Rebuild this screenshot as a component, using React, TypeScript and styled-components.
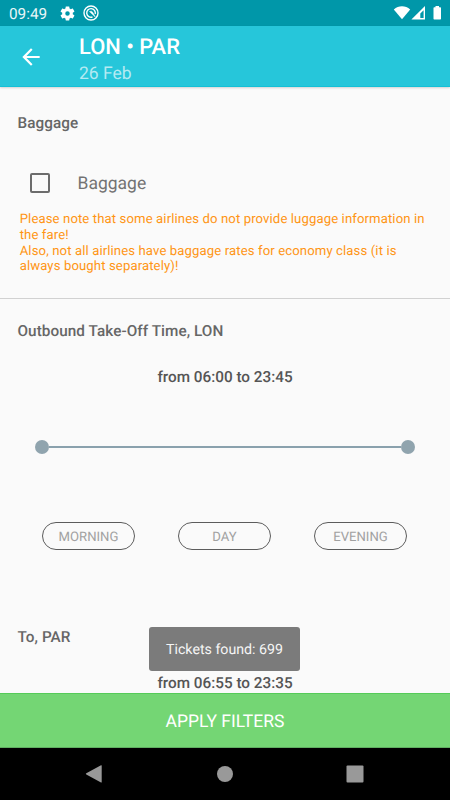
import React from "react";
import styled, { createGlobalStyle } from "styled-components";

const GlobalStyle = createGlobalStyle`
  *, *::before, *::after { box-sizing: border-box; }
  body {
    margin: 0;
    background: #fafafa;
    font-family: Roboto, "Liberation Sans", sans-serif;
    text-rendering: geometricPrecision;
  }
  button { font-family: inherit; cursor: pointer; text-rendering: inherit; }
  h1, h2, p { margin: 0; font-weight: 500; }
`;

const Screen = styled.div`
  width: 450px;
  height: 800px;
  display: flex;
  flex-direction: column;
  overflow: hidden;
  background: #fafafa;
`;

const StatusBar = styled.header`
  flex: none;
  height: 26px;
  padding: 0 7px 0 9px;
  display: flex;
  align-items: center;
  justify-content: space-between;
  background: #0097a9;
  color: #fff;
`;

const StatusGroup = styled.div`
  display: flex;
  align-items: center;
`;

const Clock = styled.span`
  width: 50px;
  font-size: 15.3px;
  line-height: 18px;
  padding-top: 1px;
  color: #e9f6f8;
`;

const RadarSlot = styled.span`
  display: flex;
  margin-left: 7px;
`;

const AppBar = styled.div`
  flex: none;
  height: 61px;
  display: flex;
  background: #26c6da;
  color: #fff;
  box-shadow: 0 1px 2px rgba(0, 0, 0, 0.16);
  border-bottom: 1px solid #14c0d6;
  z-index: 1;
`;

const BackButton = styled.button`
  width: 79px;
  padding: 1px 0 0 18px;
  border: 0;
  display: flex;
  align-items: center;
  background: none;
  color: inherit;
`;

const Titles = styled.div`
  padding-top: 9px;
`;

const Title = styled.h1`
  font-size: 21.9px;
  line-height: 26px;
`;

const Subtitle = styled.p`
  font-size: 17.5px;
  line-height: 20px;
  padding-top: 3px;
  font-weight: 400;
  color: #b5eaf2;
`;

const Content = styled.main`
  flex: 1;
  min-height: 0;
  overflow: hidden;
`;

const Section = styled.section<{ $height?: number; $divided?: boolean }>`
  height: ${(p) => (p.$height ? `${p.$height}px` : "auto")};
  border-bottom: ${(p) => (p.$divided ? "1px solid #d1d1d1" : "0")};
`;

const SectionTitle = styled.h2<{ $top: number }>`
  padding: ${(p) => p.$top}px 17.5px 0;
  font-size: 15.3px;
  line-height: 18px;
  letter-spacing: 0.06px;
  color: #666;
`;

const CheckRow = styled.label`
  height: 44px;
  margin-top: 29px;
  padding-left: 30px;
  display: flex;
  align-items: center;
`;

const CheckBox = styled.span`
  width: 20px;
  height: 20px;
  margin-right: 27.5px;
  border: 2px solid #6c6c6c;
  border-radius: 2px;
`;

const CheckLabel = styled.span`
  padding-top: 2px;
  font-size: 17.5px;
  line-height: 22px;
  color: #737373;
`;

const Notice = styled.p`
  padding: 7px 18px 0 19.7px;
  font-size: 13.13px;
  line-height: 15.75px;
  font-weight: 400;
  letter-spacing: 0.11px;
  color: #ff9514;
`;

const Range = styled.p<{ $top: number }>`
  padding-top: ${(p) => p.$top}px;
  font-size: 15.3px;
  line-height: 18px;
  text-align: center;
  color: #555;
`;

const Slider = styled.div`
  height: 14px;
  margin: 54px 35px 0;
  display: flex;
  align-items: center;
`;

const Thumb = styled.span`
  width: 14px;
  height: 14px;
  border-radius: 50%;
  background: #90a4ae;
`;

const Track = styled.span`
  flex: 1;
  height: 2px;
  background: #8aa1ad;
`;

const Chips = styled.div`
  margin: 68px 43px 0 42px;
  display: flex;
  justify-content: space-between;
`;

const Chip = styled.button`
  width: 93px;
  height: 28px;
  padding: 3px 0 0;
  border: 1px solid #5c5c5c;
  border-radius: 14px;
  background: none;
  font-size: 13.13px;
  line-height: 16px;
  color: #a1a1a1;
`;

const ApplyButton = styled.button`
  flex: none;
  height: 55px;
  padding: 3px 0 0;
  border: 0;
  border-top: 1px solid #55cb58;
  border-bottom: 1px solid #5fae61;
  background: #74d674;
  color: #fff;
  font-size: 17.5px;
  line-height: 22px;
`;

const NavBar = styled.nav`
  flex: none;
  height: 52px;
  padding: 0 86px 0 85px;
  display: flex;
  align-items: center;
  justify-content: space-between;
  background: #000;
`;

const Toast = styled.div`
  position: absolute;
  left: 149px;
  top: 627px;
  width: 151px;
  height: 44px;
  padding-top: 2px;
  display: flex;
  align-items: center;
  justify-content: center;
  border-radius: 3px;
  background: #7b7b7b;
  color: #f5f5f5;
  font-size: 14.2px;
  z-index: 2;
`;

const GearIcon = () => (
  <svg width="17" height="17" viewBox="0 0 24 24" fill="#fff">
    <path d="M19.43 12.98c.04-.32.07-.64.07-.98s-.03-.66-.07-.98l2.11-1.65c.19-.15.24-.42.12-.64l-2-3.46c-.12-.22-.39-.3-.61-.22l-2.49 1c-.52-.4-1.08-.73-1.69-.98l-.38-2.65C14.46 2.18 14.25 2 14 2h-4c-.25 0-.46.18-.49.42l-.38 2.65c-.61.25-1.17.59-1.69.98l-2.49-1c-.23-.09-.49 0-.61.22l-2 3.46c-.13.22-.07.49.12.64l2.11 1.65c-.04.32-.07.65-.07.98s.03.66.07.98l-2.11 1.65c-.19.15-.24.42-.12.64l2 3.46c.12.22.39.3.61.22l2.49-1c.52.4 1.08.73 1.69.98l.38 2.65c.03.24.24.42.49.42h4c.25 0 .46-.18.49-.42l.38-2.65c.61-.25 1.17-.59 1.69-.98l2.49 1c.23.09.49 0 .61-.22l2-3.46c.12-.22.07-.49-.12-.64l-2.11-1.65zM12 15.2a3.2 3.2 0 1 1 0-6.400 3.200 3.200 0 0 1 0 6.400z" />
  </svg>
);

const RadarIcon = () => (
  <svg width="16" height="16" viewBox="0 0 16 16" fill="none" stroke="#fff">
    <circle cx="8" cy="8" r="7" strokeWidth="1.4" />
    <path d="M9.500 12A4.300 4.300 0 1 1 12.200 9" strokeWidth="1.4" />
    <path d="M6.500 6.600Q8.600 5.400 9.800 7.500L12.300 12z" fill="#fff" strokeWidth=".5" />
  </svg>
);

const SignalIcons = () => (
  <svg width="50" height="16" viewBox="0 0 50 16" fill="#fff">
    <path d="M.8 4.4C5.5.1 12.500.1 17.200 4.400L9 14.200z" />
    <path fillRule="evenodd" d="M32 1V14.500H18.400zM30.600 5.200L27.300 8.500V13H30.600z" />
    <path d="M42.500 1H46v1.200h1.300q.7 0 .7.700V13.700q0 .7-.7.700H41.200q-.7 0-.7-.7V2.900q0-.7.700-.7H42.500z" />
  </svg>
);

const BackArrow = () => (
  <svg width="26" height="26" viewBox="0 0 24 24" fill="#fff">
    <path d="M20 11H7.830l5.590-5.590L12 4l-8 8 8 8 1.410-1.410L7.830 13H20v-2z" />
  </svg>
);

const NavIcon = ({ shape }: { shape: "back" | "home" | "recent" }) => (
  <svg width="18" height="20" viewBox="0 0 18 20" fill="#999">
    {shape === "back" && <path d="M1.300 9.300 16 1.300q.7-.4.700.4V18q0 .8-.7.400L1.300 10.500q-1-.6 0-1.200z" />}
    {shape === "home" && <circle cx="9" cy="10" r="8" />}
    {shape === "recent" && <rect x=".5" y="1.500" width="17" height="17" rx="1" />}
  </svg>
);

const PERIODS = ["MORNING", "DAY", "EVENING"];

export default function App() {
  return (
    <>
      <GlobalStyle />
      <Screen>
        <StatusBar>
          <StatusGroup>
            <Clock>09:49</Clock>
            <GearIcon />
            <RadarSlot>
              <RadarIcon />
            </RadarSlot>
          </StatusGroup>
          <SignalIcons />
        </StatusBar>
        <AppBar>
          <BackButton aria-label="Back">
            <BackArrow />
          </BackButton>
          <Titles>
            <Title>LON • PAR</Title>
            <Subtitle>26 Feb</Subtitle>
          </Titles>
        </AppBar>
        <Content>
          <Section $height={212} $divided>
            <SectionTitle $top={27}>Baggage</SectionTitle>
            <CheckRow>
              <CheckBox role="checkbox" aria-checked={false} />
              <CheckLabel>Baggage</CheckLabel>
            </CheckRow>
            <Notice>
              Please note that some airlines do not provide luggage information in the fare!
              <br />
              Also, not all airlines have baggage rates for economy class (it is always bought
              separately)!
            </Notice>
          </Section>
          <Section $height={306}>
            <SectionTitle $top={23}>Outbound Take-Off Time, LON</SectionTitle>
            <Range $top={28}>from 06:00 to 23:45</Range>
            <Slider>
              <Thumb />
              <Track />
              <Thumb />
            </Slider>
            <Chips>
              {PERIODS.map((period) => (
                <Chip key={period}>{period}</Chip>
              ))}
            </Chips>
          </Section>
          <Section>
            <SectionTitle $top={23}>To, PAR</SectionTitle>
            <Range $top={28}>from 06:55 to 23:35</Range>
          </Section>
        </Content>
        <ApplyButton>APPLY FILTERS</ApplyButton>
        <NavBar>
          <NavIcon shape="back" />
          <NavIcon shape="home" />
          <NavIcon shape="recent" />
        </NavBar>
      </Screen>
      <Toast role="status">Tickets found: 699</Toast>
    </>
  );
}
